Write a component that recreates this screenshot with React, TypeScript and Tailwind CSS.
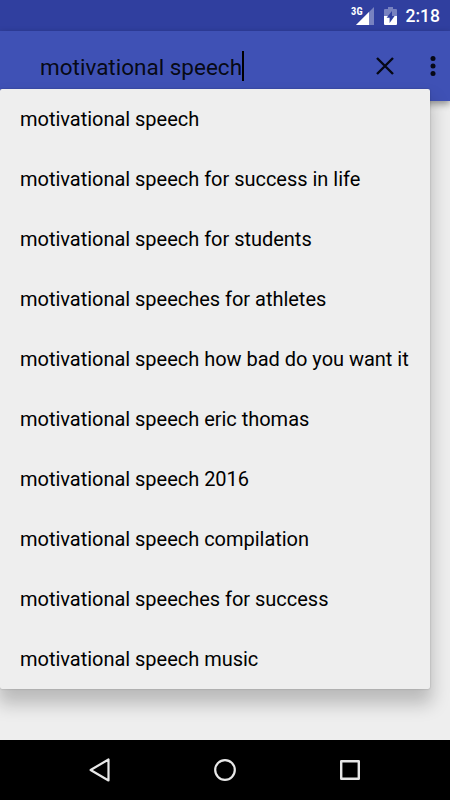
import { useState } from 'react';

const suggestions = [
  'motivational speech',
  'motivational speech for success in life',
  'motivational speech for students',
  'motivational speeches for athletes',
  'motivational speech how bad do you want it',
  'motivational speech eric thomas',
  'motivational speech 2016',
  'motivational speech compilation',
  'motivational speeches for success',
  'motivational speech music',
];

function StatusBar() {
  return (
    <div className="flex h-[31px] shrink-0 items-center justify-end bg-[#303f9f] pr-[10px] pt-px text-white">
      <span className="mb-[8px] mr-[-7px] font-['Roboto_Condensed',Roboto,sans-serif] text-[10.5px] font-bold leading-none">
        3G
      </span>
      <svg width="18" height="18" viewBox="0 0 18 18" className="mr-[10px]">
        <path d="M18 0V18H0Z" fill="#fff" fillOpacity="0.35" />
        <path d="M13 5V18H0Z" fill="#fff" />
      </svg>
      <svg width="13" height="18" viewBox="0 0 13 18" className="mr-[9px]">
        <path d="M4 0H9V2H12Q13 2 13 3V9H0V3Q0 2 1 2H4Z" fill="#fff" fillOpacity="0.35" />
        <path d="M0 9H13V17Q13 18 12 18H1Q0 18 0 17Z" fill="#fff" />
        <path d="M8 4L2.6 10.8H5.6V16L10.6 9H8Z" fill="#303f9f" />
      </svg>
      <span className="mt-[2px] text-[17.5px] font-medium leading-none">2:18</span>
    </div>
  );
}

function NavigationBar() {
  return (
    <div className="flex h-[60px] shrink-0 items-center justify-between bg-black px-[89px]">
      <button aria-label="Back">
        <svg width="22" height="24" viewBox="0 0 22 24" fill="none" stroke="#e8e8e8" strokeWidth="2.2" strokeLinejoin="round">
          <path d="M19.5 1.5V22.5L1.6 12Z" />
        </svg>
      </button>
      <button aria-label="Home">
        <svg width="22" height="22" viewBox="0 0 22 22" fill="none" stroke="#e8e8e8" strokeWidth="2.2">
          <circle cx="11" cy="11" r="9.8" />
        </svg>
      </button>
      <button aria-label="Recent apps">
        <svg width="22" height="22" viewBox="0 0 22 22" fill="none" stroke="#e8e8e8" strokeWidth="2.4" strokeLinejoin="round">
          <path d="M2.2 2.2H19.8V19.8H2.2Z" />
        </svg>
      </button>
    </div>
  );
}

export default function App() {
  const [query, setQuery] = useState('motivational speech');

  return (
    <div className="flex h-[800px] w-[450px] flex-col overflow-hidden bg-[#eeeeee] font-[Roboto,sans-serif] text-black">
      <StatusBar />

      <div className="relative min-h-0 flex-1">
        {/* Search toolbar */}
        <div className="flex h-[70px] items-center bg-[#3f51b5] pl-10 shadow-[0_3px_7px_rgba(0,0,0,0.4)]">
          <div className="flex flex-1 items-center">
            <span className="whitespace-nowrap pt-[2px] text-[22.5px] leading-[30px] text-black/90">{query}</span>
            <span className="h-[30px] w-[2px] bg-black" />
          </div>
          <button aria-label="Clear" className="mr-[36px]" onClick={() => setQuery('')}>
            <svg width="18" height="18" viewBox="0 0 18 18" stroke="#060815" strokeWidth="2.4">
              <path d="M1 1L17 17M17 1L1 17" />
            </svg>
          </button>
          <button aria-label="More options" className="mr-[14px]">
            <svg width="6" height="20" viewBox="0 0 6 20" fill="#060815">
              <circle cx="3" cy="2.6" r="2.5" />
              <circle cx="3" cy="10" r="2.5" />
              <circle cx="3" cy="17.4" r="2.5" />
            </svg>
          </button>
        </div>

        {/* Suggestions popup */}
        <ul className="absolute left-0 top-[58px] w-[430px] rounded-[2px] bg-[#eeeeee] shadow-[0_13px_18px_2px_rgba(0,0,0,0.22),0_0_2px_rgba(0,0,0,0.25)]">
          {suggestions.map((suggestion) => (
            <li
              key={suggestion}
              className="flex h-[60px] cursor-pointer items-center whitespace-nowrap pl-5 text-[20px] tracking-[-0.02px]"
              onClick={() => setQuery(suggestion)}
            >
              {suggestion}
            </li>
          ))}
        </ul>
      </div>

      <NavigationBar />
    </div>
  );
}
